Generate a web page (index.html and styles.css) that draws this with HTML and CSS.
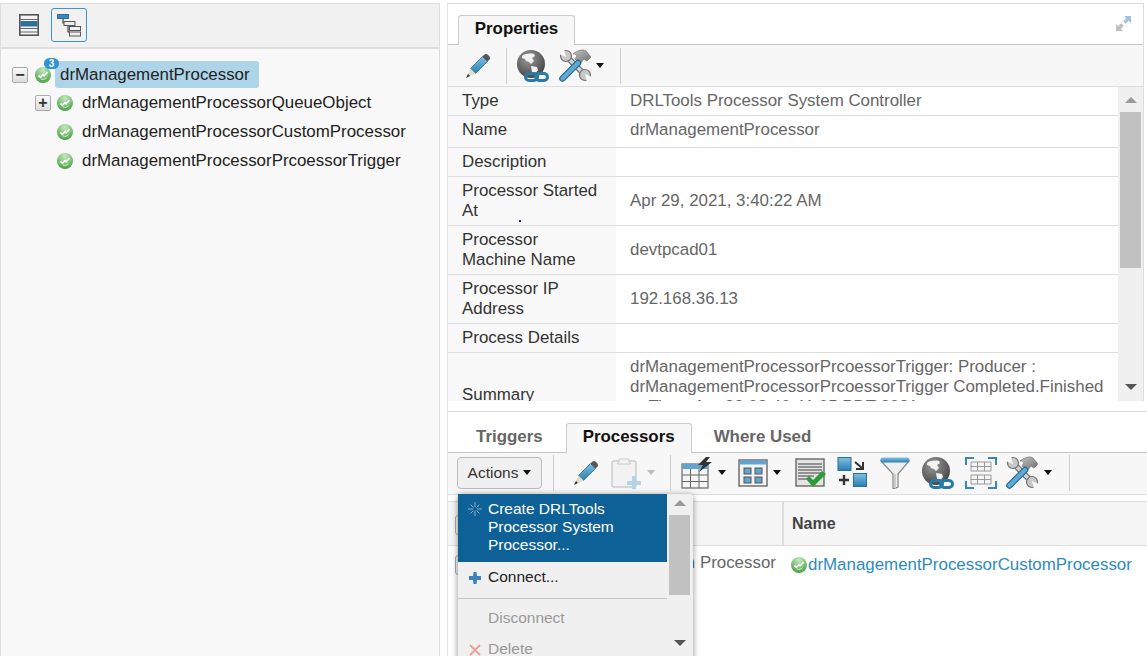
FILE: index.html
```html
<!DOCTYPE html>
<html lang="en">
<head>
    <meta charset="UTF-8">
    <title>drManagementProcessor</title>
    <link rel="stylesheet" href="styles.css">
</head>
<body>

    <svg class="icon-defs" width="0" height="0">
        <defs>
            <linearGradient id="blueFill" x1="0" y1="0" x2="0" y2="1">
                <stop offset="0" stop-color="#7fc0e4"/>
                <stop offset="1" stop-color="#2b7fb0"/>
            </linearGradient>
            <linearGradient id="greyFill" x1="0" y1="0" x2="1" y2="1">
                <stop offset="0" stop-color="#c4c4c4"/>
                <stop offset="1" stop-color="#6a6a6a"/>
            </linearGradient>
            <radialGradient id="greenFill" cx="0.5" cy="0.2" r="0.85">
                <stop offset="0" stop-color="#c4ebbd"/>
                <stop offset="1" stop-color="#3f9c3c"/>
            </radialGradient>
            <radialGradient id="globeFill" cx="0.4" cy="0.3" r="0.8">
                <stop offset="0" stop-color="#9a9a9a"/>
                <stop offset="1" stop-color="#3b3b3b"/>
            </radialGradient>
        </defs>
        <symbol id="i-status" viewBox="0 0 16 16">
            <circle cx="8" cy="8" r="8" fill="url(#greenFill)"/>
            <path d="M3.500 8.500l2 1.800 2.600-2.800 1 1.300 3.400-3.600" fill="none" stroke="#fff" stroke-width="1.700"/>
            <path d="M6 12c2 .8 4 .3 5.500-1.200" fill="none" stroke="#d8f2d4" stroke-width="1"/>
        </symbol>
        <symbol id="i-list" viewBox="0 0 20 22">
            <rect x="0.800" y="0.800" width="18.400" height="20.400" fill="#f4f4f4" stroke="#555" stroke-width="1.600"/>
            <path d="M1 5.500h18M1 14.500h18M1 18h18" stroke="#666" stroke-width="1.200"/>
            <rect x="1.500" y="7" width="17" height="5.500" fill="#2d6f9d"/>
        </symbol>
        <symbol id="i-tree" viewBox="0 0 24 23">
            <path d="M6 5v4h4M11 12v6h2" fill="none" stroke="#444" stroke-width="1.200"/>
            <rect x="0.500" y="0.500" width="11" height="4" fill="#3f86b5" stroke="#2d6f9d"/>
            <rect x="7" y="7.500" width="11" height="4" fill="#eee" stroke="#555"/>
            <rect x="12.500" y="12.500" width="11" height="4" fill="#eee" stroke="#555"/>
            <rect x="12.500" y="18" width="11" height="4" fill="#eee" stroke="#555"/>
        </symbol>
        <symbol id="i-pencil" viewBox="0 0 25 26">
            <path d="M5.500 15.500L17.500 3.500l5 5L10.500 20.500z" fill="url(#blueFill)" stroke="#2b6f9c" stroke-width="0.800"/>
            <path d="M17.500 3.500l2-2c1-.8 2-.8 3 0l2 2c.6 1 .6 2 0 3l-2 2z" fill="#555"/>
            <path d="M5.500 15.500l5 5L1 25z" fill="#e3dccb"/>
            <path d="M3 21l2 2-4 2z" fill="#333"/>
        </symbol>
        <symbol id="i-globe" viewBox="0 0 32 32">
            <circle cx="14" cy="14" r="14" fill="url(#globeFill)"/>
            <path d="M5 6c3-2.500 9-3 12-2l1 2-3 2 2 3-3 3-2-2-3-1-1-2-3-1zM14 16l6 1 1 3-3 4-3-2z" fill="#f2f2f2"/>
            <rect x="8.500" y="23.500" width="12" height="7" rx="3.500" fill="none" stroke="#2a7aa8" stroke-width="3"/>
            <rect x="18.500" y="23.500" width="12" height="7" rx="3.500" fill="none" stroke="#2a7aa8" stroke-width="3"/>
        </symbol>
        <symbol id="i-tools" viewBox="0 0 33 33">
            <path d="M9 9l15 15" stroke="#707070" stroke-width="6"/>
            <path d="M9 9l15 15" stroke="#d4d4d4" stroke-width="3.400"/>
            <circle cx="7" cy="7" r="5.500" fill="#c8c8c8" stroke="#707070" stroke-width="1.200"/>
            <path d="M7 8L0 5l5-5z" fill="#f7f7f7"/>
            <circle cx="26" cy="26" r="5.500" fill="#c8c8c8" stroke="#707070" stroke-width="1.200"/>
            <path d="M26 25l7 3-5 5z" fill="#f7f7f7"/>
            <path d="M14 5C19 1 24 0 27 2l5 6-4 4-3-2-4 5-5-5 2-3c-1-2-2-2-4-2z" fill="url(#greyFill)" stroke="#666" stroke-width="0.600"/>
            <path d="M3.500 29.500L19 14" stroke="#24668f" stroke-width="6.500" stroke-linecap="round"/>
            <path d="M3.500 29.500L19 14" stroke="#5fa9d4" stroke-width="4.200" stroke-linecap="round"/>
        </symbol>
        <symbol id="i-clip" viewBox="0 0 30 32">
            <rect x="1" y="4" width="24" height="26" rx="2" fill="#f2f2f2" stroke="#ccc" stroke-width="1.500"/>
            <path d="M8 5V2h10v3l2 2H6z" fill="#f2f2f2" stroke="#ccc"/>
            <path d="M21 19h4v5h5v4h-5v4h-4v-4h-5v-4h5z" fill="#b5d3e4"/>
        </symbol>
        <symbol id="i-table" viewBox="0 0 33 32">
            <rect x="1" y="7" width="26" height="24" fill="#f4f4f4" stroke="#666" stroke-width="1.200"/>
            <rect x="1" y="7" width="26" height="5" fill="#5fa5cf"/>
            <path d="M1 18h26M1 24.500h26M9.500 12v19M18 12v19" stroke="#666" stroke-width="1"/>
            <path d="M25 0l-8 8 5 0-4 7 13-10h-6l4-5z" fill="#333"/>
        </symbol>
        <symbol id="i-layout" viewBox="0 0 30 28">
            <rect x="1" y="1" width="28" height="26" fill="#f4f4f4" stroke="#666" stroke-width="1.400"/>
            <rect x="1.500" y="1.500" width="27" height="4" fill="#5fa5cf"/>
            <rect x="6" y="9" width="7" height="6" fill="#5fa5cf" stroke="#555"/>
            <rect x="17" y="9" width="7" height="6" fill="#5fa5cf" stroke="#555"/>
            <rect x="6" y="18" width="7" height="6" fill="#5fa5cf" stroke="#555"/>
            <rect x="17" y="18" width="7" height="6" fill="#5fa5cf" stroke="#555"/>
        </symbol>
        <symbol id="i-check" viewBox="0 0 31 30">
            <rect x="1" y="1" width="28" height="27" fill="#e4e4e4" stroke="#666" stroke-width="1.400"/>
            <path d="M3 6h24M3 9h24M3 12h24M3 15h24M3 18h16M3 21h12" stroke="#777" stroke-width="1.500"/>
            <path d="M11 21l3-3 4 4 9-9 4 3-13 13z" fill="#2f9a3a"/>
        </symbol>
        <symbol id="i-move" viewBox="0 0 30 31">
            <rect x="1" y="0.500" width="13" height="13" fill="url(#blueFill)" stroke="#2b6f9c"/>
            <rect x="16.500" y="16.500" width="13" height="13" fill="url(#blueFill)" stroke="#2b6f9c"/>
            <path d="M18 5l7 6M26 5v7h-7" fill="none" stroke="#333" stroke-width="2"/>
            <path d="M2 23h10M7 18v10" stroke="#333" stroke-width="2.400"/>
        </symbol>
        <symbol id="i-funnel" viewBox="0 0 30 32">
            <path d="M1 4h28L18 17v13l-5 2V17z" fill="#eee" stroke="#888" stroke-width="1.200"/>
            <path d="M15 17v14" stroke="#ccc" stroke-width="2"/>
            <rect x="0.500" y="0.500" width="29" height="5" rx="2" fill="url(#blueFill)"/>
        </symbol>
        <symbol id="i-frame" viewBox="0 0 32 32">
            <path d="M1 8V1h8M23 1h8v7M31 24v7h-8M9 31H1v-7" fill="none" stroke="#3a87b5" stroke-width="2"/>
            <path d="M6 5h20v9H6zM6 18h20v9H6z" fill="#f4f4f4" stroke="#999"/>
            <path d="M6 9.500h20M6 22.500h20M12.500 5v9M19.500 5v9M12.500 18v9M19.500 18v9" stroke="#999"/>
        </symbol>
    </svg>

    <div class="page">
        <div class="tree-panel">
            <div class="tree-toolbar">
                <button class="view-btn"><svg class="ic-list"><use href="#i-list"/></svg></button>
                <button class="view-btn view-on"><svg class="ic-tree"><use href="#i-tree"/></svg></button>
            </div>
            <div class="tree">
                <div class="tree-root">
                    <span class="expander">&minus;</span>
                    <span class="status-wrap">
                        <svg class="ic-status"><use href="#i-status"/></svg>
                        <span class="badge">3</span>
                    </span>
                    <span class="root-label">drManagementProcessor</span>
                </div>
                <div class="tree-row">
                    <span class="expander">+</span>
                    <svg class="ic-status"><use href="#i-status"/></svg>
                    <span class="node-label">drManagementProcessorQueueObject</span>
                </div>
                <div class="tree-row">
                    <span class="expander-gap"></span>
                    <svg class="ic-status"><use href="#i-status"/></svg>
                    <span class="node-label">drManagementProcessorCustomProcessor</span>
                </div>
                <div class="tree-row">
                    <span class="expander-gap"></span>
                    <svg class="ic-status"><use href="#i-status"/></svg>
                    <span class="node-label">drManagementProcessorPrcoessorTrigger</span>
                </div>
            </div>
        </div>

        <div class="detail-panel">
            <div class="detail-top">
                <div class="top-tabs">
                    <span class="tab tab-active tab-props">Properties</span>
                    <svg class="ic-expand" viewBox="0 0 17 17">
                        <path d="M9 1h7v7l-2.300-2.300-3 3-2.400-2.400 3-3z" fill="#9cc4de"/>
                        <path d="M8 16H1V9l2.300 2.300 3-3 2.400 2.400-3 3z" fill="#bdbdbd"/>
                    </svg>
                </div>
                <div class="toolbar toolbar-top">
                    <span class="tool tool-pencil"><svg class="ic-pencil"><use href="#i-pencil"/></svg></span>
                    <span class="sep"></span>
                    <span class="tool tool-globe"><svg class="ic-globe"><use href="#i-globe"/></svg></span>
                    <span class="tool tool-tools"><svg class="ic-tools"><use href="#i-tools"/></svg><i class="caret"></i></span>
                    <span class="sep"></span>
                </div>

                <div class="props">
                    <div class="props-rows">
                        <div class="prop"><div class="prop-name">Type</div><div class="prop-value">DRLTools Processor System Controller</div></div>
                        <div class="prop prop-name-row"><div class="prop-name">Name</div><div class="prop-value">drManagementProcessor</div></div>
                        <div class="prop"><div class="prop-name">Description</div><div class="prop-value"></div></div>
                        <div class="prop"><div class="prop-name">Processor Started At</div><div class="prop-value">Apr 29, 2021, 3:40:22 AM</div></div>
                        <div class="prop"><div class="prop-name">Processor Machine Name</div><div class="prop-value">devtpcad01</div></div>
                        <div class="prop"><div class="prop-name">Processor IP Address</div><div class="prop-value">192.168.36.13</div></div>
                        <div class="prop"><div class="prop-name">Process Details</div><div class="prop-value"></div></div>
                        <div class="prop prop-summary"><div class="prop-name">Summary</div><div class="prop-value">drManagementProcessorPrcoessorTrigger: Producer : drManagementProcessorPrcoessorTrigger Completed.Finished at Time: Apr 29 03:40:41.05 PDT 2021</div></div>
                    </div>
                    <div class="scrollbar scrollbar-props">
                        <i class="arrow-up"></i>
                        <div class="thumb"></div>
                        <i class="arrow-down"></i>
                    </div>
                </div>
            </div>

            <div class="bottom-tabs">
                <span class="tab tab-triggers">Triggers</span>
                <span class="tab tab-active tab-procs">Processors</span>
                <span class="tab tab-used">Where Used</span>
            </div>
            <div class="toolbar toolbar-bottom">
                <button class="actions-btn">Actions<i class="caret"></i></button>
                <span class="sep"></span>
                <span class="tool b-pencil"><svg class="ic-pencil"><use href="#i-pencil"/></svg></span>
                <span class="tool b-clip"><svg class="ic-clip"><use href="#i-clip"/></svg><i class="caret caret-off"></i></span>
                <span class="sep"></span>
                <span class="tool b-table"><svg class="ic-table"><use href="#i-table"/></svg><i class="caret"></i></span>
                <span class="tool b-layout"><svg class="ic-layout"><use href="#i-layout"/></svg><i class="caret"></i></span>
                <span class="tool b-check"><svg class="ic-check"><use href="#i-check"/></svg></span>
                <span class="tool b-move"><svg class="ic-move"><use href="#i-move"/></svg></span>
                <span class="tool b-funnel"><svg class="ic-funnel"><use href="#i-funnel"/></svg></span>
                <span class="tool b-globe"><svg class="ic-globe"><use href="#i-globe"/></svg></span>
                <span class="tool b-frame"><svg class="ic-frame"><use href="#i-frame"/></svg></span>
                <span class="tool b-tools"><svg class="ic-tools"><use href="#i-tools"/></svg><i class="caret"></i></span>
                <span class="sep"></span>
            </div>

            <div class="grid-wrap">
                <div class="grid-head">
                    <div class="cell-check"><span class="checkbox"></span></div>
                    <div class="cell-type"></div>
                    <div class="cell-name">Name</div>
                </div>
                <div class="grid-row">
                    <div class="cell-check"><span class="checkbox"></span></div>
                    <div class="cell-type">Custom Processor</div>
                    <div class="cell-name">
                        <svg class="ic-status"><use href="#i-status"/></svg><a class="proc-link">drManagementProcessorCustomProcessor</a>
                    </div>
                </div>
            </div>

            <div class="menu">
                <div class="menu-items">
                    <div class="menu-item menu-hot">
                        <svg class="menu-ic" viewBox="0 0 14 14">
                            <path d="M7 0v5M7 9v5M0 7h5M9 7h5M2.500 2.500l3 3M8.500 8.500l3 3M11.500 2.500l-3 3M5.500 8.500l-3 3" stroke="#9db9cc" stroke-width="0.900"/>
                        </svg>
                        <span>Create DRLTools Processor System Processor...</span>
                    </div>
                    <div class="menu-item menu-connect">
                        <svg class="menu-ic" viewBox="0 0 14 14">
                            <path d="M5.500 1h3l.5 4h4v4H9l-.5 4h-3L5 9H1V5h4z" fill="#3f7fc4"/>
                        </svg>
                        <span>Connect...</span>
                    </div>
                    <div class="menu-line"></div>
                    <div class="menu-item menu-off menu-disconnect"><span>Disconnect</span></div>
                    <div class="menu-item menu-off menu-delete">
                        <svg class="menu-ic" viewBox="0 0 14 14">
                            <path d="M2 2l10 10M12 2L2 12" stroke="#e8a195" stroke-width="1.800"/>
                        </svg>
                        <span>Delete</span>
                    </div>
                </div>
                <div class="scrollbar scrollbar-menu">
                    <i class="arrow-up"></i>
                    <div class="thumb"></div>
                    <i class="arrow-down"></i>
                </div>
            </div>
            <span class="stray-dot"></span>
        </div>
    </div>

</body>
</html>
```

FILE: styles.css
```css
html, body { height: 100%; }
body { margin: 0; background: #fff; overflow: hidden; font-family: "Liberation Sans", Arial, sans-serif; font-size: 16.9px; color: #333; }
.icon-defs { position: absolute; }
svg { display: block; }

.page { display: flex; height: 656px; padding-top: 3px; box-sizing: border-box; }

/* left tree */
.tree-panel { width: 440px; flex: none; box-sizing: border-box; background: #f8f8f8; border: 1px solid #ddd; border-width: 1px 1px 0 1px; }
.tree-toolbar { height: 39px; display: flex; align-items: flex-start; background: #f1f1f1; border-bottom: 2px solid #ddd; padding: 4px 0 0 10px; gap: 4px; }
.view-btn { width: 36px; height: 34px; padding: 0; background: none; border: 1px solid transparent; border-radius: 3px; display: flex; align-items: center; justify-content: center; }
.view-on { border-color: #3c94cc; }
.ic-list { width: 20px; height: 22px; }
.ic-tree { width: 24px; height: 23px; }
.tree { padding-top: 12px; color: #222; }
.tree-root { display: flex; align-items: center; height: 27px; padding-left: 11px; }
.tree-row { display: flex; align-items: center; height: 29px; padding-left: 34px; }
.expander { width: 14px; height: 14px; border: 1px solid #aaa; border-radius: 2px; background: linear-gradient(#fafafa, #ddd); display: flex; align-items: center; justify-content: center; font-weight: bold; font-size: 16px; line-height: 14px; color: #333; flex: none; }
.expander-gap { width: 16px; flex: none; }
.status-wrap { position: relative; margin-left: 7px; }
.ic-status { width: 16px; height: 16px; flex: none; }
.tree-row .ic-status { margin-left: 6px; }
.badge { position: absolute; left: 9px; top: -9px; width: 15px; height: 11px; border-radius: 6px; background: #2f93d6; color: #fff; font-size: 10px; font-weight: bold; line-height: 11px; text-align: center; }
.root-label { margin-left: 4px; width: 204px; height: 27px; line-height: 27px; box-sizing: border-box; padding-left: 5px; background: #aed4e8; border-radius: 3px; }
.node-label { margin-left: 9px; white-space: nowrap; }

/* right side */
.detail-panel { position: relative; margin-left: 7px; width: 700px; flex: none; border-left: 1px solid #e4e4e4; box-sizing: border-box; height: 653px; }
.detail-top { width: 696px; box-sizing: border-box; border-top: 1px solid #ddd; border-right: 1px solid #ddd; }
.top-tabs { display: flex; align-items: flex-end; justify-content: space-between; height: 40px; padding: 0 11px 0 10px; border-bottom: 1px solid #c4c4c4; }
.tab { font-weight: bold; color: #666; line-height: 25px; height: 30px; box-sizing: border-box; border: 1px solid transparent; border-bottom: none; margin-bottom: -1px; }
.tab-active { color: #111; background: #f7f7f7; border-color: #ccc; border-radius: 3px 3px 0 0; }
.tab-props { width: 117px; text-align: center; }
.ic-expand { width: 17px; height: 17px; align-self: flex-start; margin-top: 11px; }

.toolbar { display: flex; align-items: center; background: #f7f7f7; box-sizing: border-box; }
.toolbar-top { height: 42px; border-bottom: 1px solid #ddd; padding-left: 17px; }
.tool { display: flex; align-items: center; flex: none; }
.sep { width: 1px; height: 36px; background: #ccc; flex: none; }
.caret { display: block; width: 0; height: 0; border: 4px solid transparent; border-top: 5px solid #111; border-bottom: 0; margin-left: 4px; }
.caret-off { border-top-color: #bbb; }
.ic-pencil { width: 25px; height: 26px; }
.ic-globe { width: 32px; height: 32px; }
.ic-tools { width: 33px; height: 33px; }
.tool-pencil { width: 41px; }
.tool-globe { margin-left: 10px; width: 42px; }
.tool-tools { width: 61px; }

.props { display: flex; height: 314px; overflow: hidden; }
.props-rows { width: 670px; flex: none; }
.prop { display: flex; border-bottom: 1px solid #ddd; }
.prop-name { width: 168px; flex: none; box-sizing: border-box; padding: 4px 14px; line-height: 20px; background: #f8f8f8; display: flex; align-items: center; color: #333; }
.prop-value { flex: 1; padding: 4px 14px; line-height: 20px; color: #666; display: flex; align-items: center; }
.prop-name-row { height: 32px; box-sizing: border-box; }
.prop-name-row .prop-name, .prop-name-row .prop-value { padding-top: 3px; padding-bottom: 6px; }
.prop-summary { min-height: 84px; }
.prop-summary .prop-value { align-items: flex-start; }
.scrollbar { background: #f0f0f0; position: relative; flex: none; }
.scrollbar-props { width: 25px; }
.scrollbar .thumb { position: absolute; background: #c1c1c1; }
.scrollbar-props .thumb { left: 2px; right: 2px; top: 25px; height: 156px; }
.arrow-up, .arrow-down { position: absolute; left: 50%; margin-left: -6px; width: 0; height: 0; border: 6px solid transparent; }
.arrow-up { border-top: 0; border-bottom: 6px solid #999; top: 10px; }
.arrow-down { border-bottom: 0; border-top: 6px solid #555; bottom: 11px; }

.bottom-tabs { display: flex; align-items: flex-end; height: 42px; margin-top: 10px; border-top: 1px solid #ddd; border-bottom: 1px solid #c4c4c4; box-sizing: border-box; }
.tab-triggers { margin-left: 27px; }
.tab-procs { width: 126px; text-align: center; margin-left: 22px; }
.tab-used { margin-left: 21px; }

.toolbar-bottom { height: 42px; border-bottom: 1px solid #ddd; padding: 0 0 2px 9px; }
.actions-btn { width: 85px; height: 32px; flex: none; padding: 0; background: #f0f0f0; border: 1px solid #bbb; border-radius: 4px; font: inherit; font-size: 15.5px; color: #333; display: flex; align-items: center; justify-content: center; margin-right: 11px; }
.actions-btn .caret { margin-left: 5px; }
.b-pencil { margin-left: 19px; }
.b-clip { margin-left: 13px; width: 59px; }
.ic-clip { width: 30px; height: 32px; }
.b-clip .caret { margin-left: 6px; }
.b-table { margin-left: 10px; }
.ic-table { width: 33px; height: 32px; }
.b-layout { margin-left: 12px; }
.ic-layout { width: 30px; height: 28px; }
.b-layout .caret { margin-left: 5px; }
.b-check { margin-left: 14px; }
.ic-check { width: 31px; height: 30px; }
.b-move { margin-left: 11px; }
.ic-move { width: 30px; height: 31px; }
.b-funnel { margin-left: 13px; }
.ic-funnel { width: 30px; height: 32px; }
.b-globe { margin-left: 12px; }
.b-frame { margin-left: 11px; }
.ic-frame { width: 32px; height: 32px; }
.b-tools { margin-left: 9px; margin-right: 17px; }
.b-tools .caret { margin-left: 5px; }

.grid-wrap { margin-top: 6px; }
.grid-head, .grid-row { display: grid; grid-template-columns: 191px 143px 1fr; }
.grid-head { height: 45px; background: #f5f5f5; border-top: 1px solid #ddd; border-bottom: 1px solid #ddd; box-sizing: border-box; font-weight: bold; font-size: 16px; }
.grid-head .cell-name { border-left: 2px solid #ddd; padding-left: 8px; line-height: 43px; color: #444; }
.cell-check { padding-left: 7px; }
.grid-head .cell-check { padding-top: 13px; }
.grid-row { padding-top: 8px; line-height: 18px; color: #666; }
.grid-row .cell-check { padding-top: 1px; }
.grid-row .cell-name { display: flex; align-items: center; padding-left: 9px; gap: 1px; }
.grid-row .cell-type { white-space: nowrap; margin-left: -2px; }
.checkbox { display: block; width: 18px; height: 18px; border: 1px solid #aaa; border-radius: 3px; background: #f4f4f4; }
.proc-link { color: #2e8bc0; white-space: nowrap; }

/* popup */
.menu { position: absolute; left: 10px; top: 491px; width: 235px; height: 175px; background: #f0f0f0; display: flex; box-shadow: 0 1px 6px rgba(0, 0, 0, 0.45); border-radius: 3px; font-size: 15.5px; }
.menu-items { width: 209px; flex: none; }
.menu-item { display: flex; line-height: 18px; padding-left: 30px; position: relative; color: #222; box-sizing: border-box; }
.menu-hot { background: #0e6196; color: #fff; height: 68px; padding-top: 6px; }
.menu-connect { padding-top: 6px; height: 36px; }
.menu-line { height: 1px; background: #c4c4c4; }
.menu-off { color: #999; }
.menu-disconnect { padding-top: 10px; height: 31px; }
.menu-delete { padding-top: 10px; height: 40px; }
.menu-ic { position: absolute; left: 10px; width: 14px; height: 14px; }
.menu-hot .menu-ic { top: 8px; }
.menu-connect .menu-ic { top: 9px; }
.menu-delete .menu-ic { top: 13px; }
.scrollbar-menu { margin-left: 2px; width: 21px; }
.scrollbar-menu .thumb { left: 0; right: 0; top: 21px; height: 80px; }
.scrollbar-menu .arrow-up { top: 6px; }
.scrollbar-menu .arrow-down { top: 146px; bottom: auto; }

.stray-dot { position: absolute; left: 71px; top: 217px; width: 2px; height: 2px; background: #2222cc; }
```
